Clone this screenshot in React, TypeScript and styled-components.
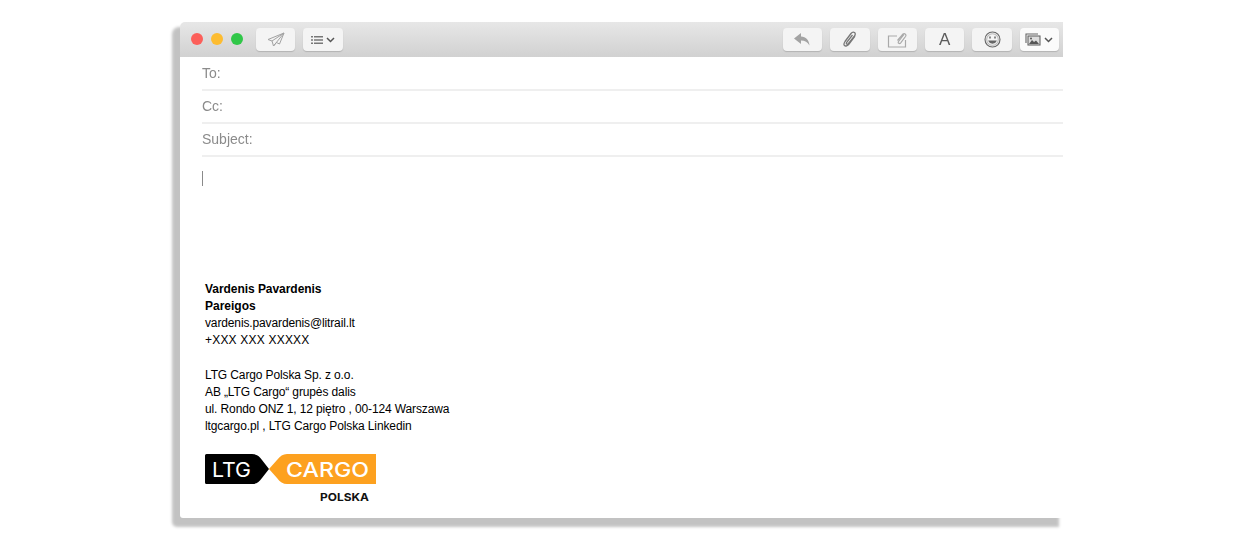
import React from "react";
import styled, { createGlobalStyle } from "styled-components";

const GlobalStyle = createGlobalStyle`
  html, body {
    margin: 0;
    padding: 0;
    background: #ffffff;
    font-family: "Liberation Sans", Arial, sans-serif;
  }
`;

const Page = styled.div`
  width: 1243px;
  height: 540px;
  padding: 22px 0 0 180px;
  box-sizing: border-box;
  overflow: hidden;
`;

const MailWindow = styled.div`
  width: 883px;
  height: 496px;
  background: #ffffff;
  border-radius: 5px 0 0 3px;
  box-shadow: -6px 7px 3px 2px rgba(0, 0, 0, 0.24);
  display: flex;
  flex-direction: column;
`;

const Toolbar = styled.div`
  height: 35px;
  flex: none;
  padding: 6px 4px 0 11px;
  box-sizing: border-box;
  display: flex;
  align-items: flex-start;
  background: linear-gradient(#e7e7e7, #d1d1d1);
  border-radius: 5px 0 0 0;
`;

const Dots = styled.div`
  display: flex;
  gap: 8px;
  margin: 5px 13px 0 0;
  filter: blur(0.3px);
`;

const Dot = styled.span<{ $color: string }>`
  width: 12px;
  height: 12px;
  border-radius: 50%;
  background: ${(p) => p.$color};
`;

const ToolGroup = styled.div`
  display: flex;
  gap: 8px;
  filter: blur(0.35px);
`;

const RightGroup = styled(ToolGroup)`
  margin-left: auto;
`;

const ToolButton = styled.div<{ $bright?: boolean }>`
  width: 39.33px;
  height: 23px;
  box-sizing: border-box;
  display: flex;
  align-items: center;
  justify-content: center;
  gap: 3px;
  border-radius: 4px;
  background: ${(p) => (p.$bright ? "#fbfbfb" : "#f4f4f4")};
  box-shadow: 0 1px 1px rgba(0, 0, 0, 0.16);
  svg {
    display: block;
  }
`;

const FontGlyph = styled.span`
  font-size: 17px;
  line-height: 1;
  color: #5c5c5c;
`;

const Field = styled.div`
  height: 33px;
  margin-left: 22px;
  padding-top: 7px;
  box-sizing: border-box;
  border-bottom: 2px solid #efefef;
  font-size: 14px;
  line-height: 16px;
  color: #8b8b8b;
`;

const FirstField = styled(Field)`
  height: 34px;
  padding-top: 8px;
`;

const FieldLabel = styled.span`
  display: inline-block;
  filter: blur(0.35px);
`;

const Body = styled.div`
  flex: 1;
  padding: 14px 0 0 22px;
  display: flex;
  flex-direction: column;
`;

const Caret = styled.div`
  width: 1px;
  height: 15px;
  background: #8a8a8a;
`;

const Signature = styled.div`
  margin: 95px 0 0 3px;
  font-size: 12px;
  line-height: 17px;
  color: #000000;
`;

const Line = styled.div<{ $track?: number; $bold?: boolean }>`
  letter-spacing: ${(p) => p.$track ?? 0}px;
  font-weight: ${(p) => (p.$bold ? 700 : 400)};
`;

const Spacer = styled.div`
  height: 18px;
`;

const LogoWrap = styled.div`
  margin: 19px 0 0 3px;
  svg {
    display: block;
  }
`;

const Logo = () => (
  <svg width="172" height="52" viewBox="0 0 172 52">
    <path d="M0 1.500Q0 0 1.500 0H47C52 0 54 2 57 6L64 15L57 24C54 28 52 30 47 30H1.500Q0 30 0 28.500Z" fill="#000000" />
    <path d="M64 15L72 6C75 2 78 0 82 0H171V30H82C78 30 75 28 72 24Z" fill="#fda11f" />
    <text x="7" y="23" fontFamily="Inter, sans-serif" fontSize="20.500" fontWeight="400" fill="#ffffff" textLength="39" lengthAdjust="spacingAndGlyphs">
      LTG
    </text>
    <text x="81" y="23" fontFamily="Inter, sans-serif" fontSize="20.500" fontWeight="500" fill="#ffffff" textLength="83" lengthAdjust="spacingAndGlyphs">
      CARGO
    </text>
    <text x="115" y="47" fontFamily="Inter, sans-serif" fontSize="11" fontWeight="700" fill="#111111" textLength="49" lengthAdjust="spacingAndGlyphs">
      POLSKA
    </text>
  </svg>
);

const Chevron = () => (
  <svg width="9" height="6" viewBox="0 0 9 6" fill="none" stroke="#555" strokeWidth="1.5">
    <path d="M1 1l3.500 3.500L8 1" />
  </svg>
);

const App: React.FC = () => {
  return (
    <Page>
      <GlobalStyle />
      <MailWindow>
        <Toolbar>
          <Dots>
            <Dot $color="#fc5f5a" />
            <Dot $color="#fdbc30" />
            <Dot $color="#30c748" />
          </Dots>
          <ToolGroup>
            <ToolButton>
              <svg width="18" height="15" viewBox="0 0 18 15" fill="none" stroke="#a2a2a2" strokeWidth="1">
                <path d="M17 1L1 7.500l4 1.500 1.500 5 3-3.500 3 1.500ZM5 9L17 1 6.500 14" />
              </svg>
            </ToolButton>
            <ToolButton>
              <svg width="12" height="8" viewBox="0 0 12 8" fill="#777">
                <path d="M0 0h2v1.600H0zM3 0h9v1.600H3zM0 3.200h2v1.600H0zM3 3.200h9v1.600H3zM0 6.400h2V8H0zM3 6.400h9V8H3z" />
              </svg>
              <Chevron />
            </ToolButton>
          </ToolGroup>
          <RightGroup>
            <ToolButton>
              <svg width="17" height="13" viewBox="0 0 17 13" fill="#a3a3a3">
                <path d="M7 0L0 5.500 7 11V7.500c4 0 6.500 1.500 8.500 5C15 7 12 3.500 7 3.500Z" />
              </svg>
            </ToolButton>
            <ToolButton>
              <svg width="14" height="17" viewBox="0 0 14 17" fill="none" stroke="#777" strokeWidth="1.300">
                <path d="M12 5L6 13c-1.500 2-3.500 2.500-4.500 1.500S1 12 2 10.500L8 2.500c1-1.300 2.500-1.700 3.500-1s1 2.200 0 3.500L5.500 12.500c-.6.800-1.300 1-1.800.6s-.4-1.100.2-1.900L9.500 4" />
              </svg>
            </ToolButton>
            <ToolButton>
              <svg width="20" height="16" viewBox="0 0 20 16" fill="none" stroke="#a9a9a9" strokeWidth="1.200">
                <path d="M10 4H1.500v11h17V8" />
                <path d="M17 2.500L11.500 9.500c-1 1.500 1 2.800 2.200 1.300L18.500 4.500c1.200-1.700-.8-3.700-2.500-2.500L10.500 8.500" />
              </svg>
            </ToolButton>
            <ToolButton>
              <FontGlyph>A</FontGlyph>
            </ToolButton>
            <ToolButton>
              <svg width="17" height="17" viewBox="0 0 17 17" fill="none" stroke="#666" strokeWidth="1.100">
                <circle cx="8.500" cy="8.500" r="7.500" />
                <circle cx="8.500" cy="8.500" r="5.800" stroke="#bbb" />
                <path d="M5 10c1 2.800 6 2.800 7 0Z" fill="#666" />
                <path d="M6 5.500v2M11 5.500v2" strokeWidth="1.500" />
              </svg>
            </ToolButton>
            <ToolButton $bright>
              <svg width="16" height="13" viewBox="0 0 16 13" fill="none" stroke="#666" strokeWidth="1.100">
                <path d="M1 10V1h12" />
                <rect x="3" y="3" width="12" height="9" fill="#ddd" />
                <path d="M4 11l3-4 2 2 2-1.500 3 3.500Z" fill="#555" stroke="none" />
                <circle cx="6" cy="5.500" r="1" fill="#555" stroke="none" />
              </svg>
              <Chevron />
            </ToolButton>
          </RightGroup>
        </Toolbar>
        <FirstField>
          <FieldLabel>To:</FieldLabel>
        </FirstField>
        <Field>
          <FieldLabel>Cc:</FieldLabel>
        </Field>
        <Field>
          <FieldLabel>Subject:</FieldLabel>
        </Field>
        <Body>
          <Caret />
          <Signature>
            <Line $bold $track={-0.05}>Vardenis Pavardenis</Line>
            <Line $bold>Pareigos</Line>
            <Line $track={-0.13}>vardenis.pavardenis@litrail.lt</Line>
            <Line $track={0.2}>+XXX XXX XXXXX</Line>
            <Spacer />
            <Line $track={-0.12}>LTG Cargo Polska Sp. z o.o.</Line>
            <Line $track={-0.12}>AB „LTG Cargo“ grupės dalis</Line>
            <Line $track={-0.12}>ul. Rondo ONZ 1, 12 piętro , 00-124 Warszawa</Line>
            <Line $track={-0.12}>ltgcargo.pl , LTG Cargo Polska Linkedin</Line>
          </Signature>
          <LogoWrap>
            <Logo />
          </LogoWrap>
        </Body>
      </MailWindow>
    </Page>
  );
};

export default App;
